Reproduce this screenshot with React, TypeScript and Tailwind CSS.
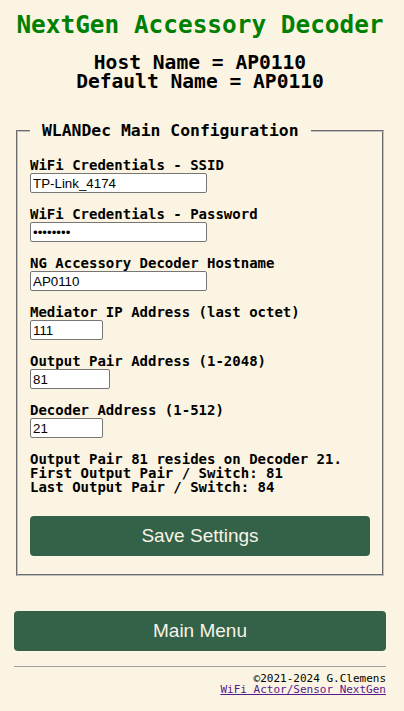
import React from 'react';

const mono = "font-['DejaVu_Sans_Mono',monospace]";

const Field: React.FC<{ label: string; value: string; width: string; type?: string }> = ({
  label,
  value,
  width,
  type = 'text',
}) => (
  <div className="mb-[13px]">
    <label className={`block text-[14px] leading-[16px] font-bold text-black ${mono}`}>{label}</label>
    <input
      type={type}
      defaultValue={value}
      className={`block h-[20px] ${width} bg-white border border-[#767676] rounded-[2px] px-[2px] text-[13.33px] text-black font-['Liberation_Sans',Arial,sans-serif] outline-none`}
    />
  </div>
);

export default function App() {
  return (
    <div className="min-h-[711px] bg-[#fbf4e2]">
      <div className="ml-[14px] w-[372px] pt-[10px]">
        {/* Header */}
        <h1 className={`text-center text-[24.4px] leading-[30px] font-bold text-[#008000] ${mono}`}>
          NextGen Accessory Decoder
        </h1>
        <div className={`mt-[13px] text-center text-[19.6px] leading-[19px] font-bold text-black ${mono}`}>
          <div>Host Name = AP0110</div>
          <div>Default Name = AP0110</div>
        </div>

        {/* Config */}
        <fieldset className="mt-[30px] mx-[2px] border-2 [border-style:groove] border-[#c0c0c0] px-[12px] pt-[16px] pb-[18px]">
          <legend className={`px-[12px] text-[16.4px] leading-[20px] font-bold text-black ${mono}`}>
            WLANDec Main Configuration
          </legend>
          <Field label="WiFi Credentials - SSID" value="TP-Link_4174" width="w-[177px]" />
          <Field label="WiFi Credentials - Password" value="12345678" width="w-[177px]" type="password" />
          <Field label="NG Accessory Decoder Hostname" value="AP0110" width="w-[177px]" />
          <Field label="Mediator IP Address (last octet)" value="111" width="w-[73px]" />
          <Field label="Output Pair Address (1-2048)" value="81" width="w-[80px]" />
          <Field label="Decoder Address (1-512)" value="21" width="w-[73px]" />

          <div className={`mt-[14px] text-[14px] leading-[14px] font-bold text-black ${mono}`}>
            <div>Output Pair 81 resides on Decoder 21.</div>
            <div>First Output Pair / Switch: 81</div>
            <div>Last Output Pair / Switch: 84</div>
          </div>

          <button className="mt-[22px] w-full h-[40px] rounded-[4px] bg-[#336249] text-[#f7f3e6] text-[19px] font-['Liberation_Sans',Arial,sans-serif]">
            Save Settings
          </button>
        </fieldset>

        <button className="mt-[35px] w-full h-[40px] rounded-[4px] bg-[#336249] text-[#f7f3e6] text-[19px] font-['Liberation_Sans',Arial,sans-serif]">
          Main Menu
        </button>

        <hr className="mt-[15px] border-t border-[#a0a0a0]" />
        <div className={`mt-[6px] text-right text-[11px] leading-[11px] text-black ${mono}`}>
          <div>©2021-2024 G.Clemens</div>
          <a href="#" className="text-[#551a8b] underline">
            WiFi Actor/Sensor NextGen
          </a>
        </div>
      </div>
    </div>
  );
}
